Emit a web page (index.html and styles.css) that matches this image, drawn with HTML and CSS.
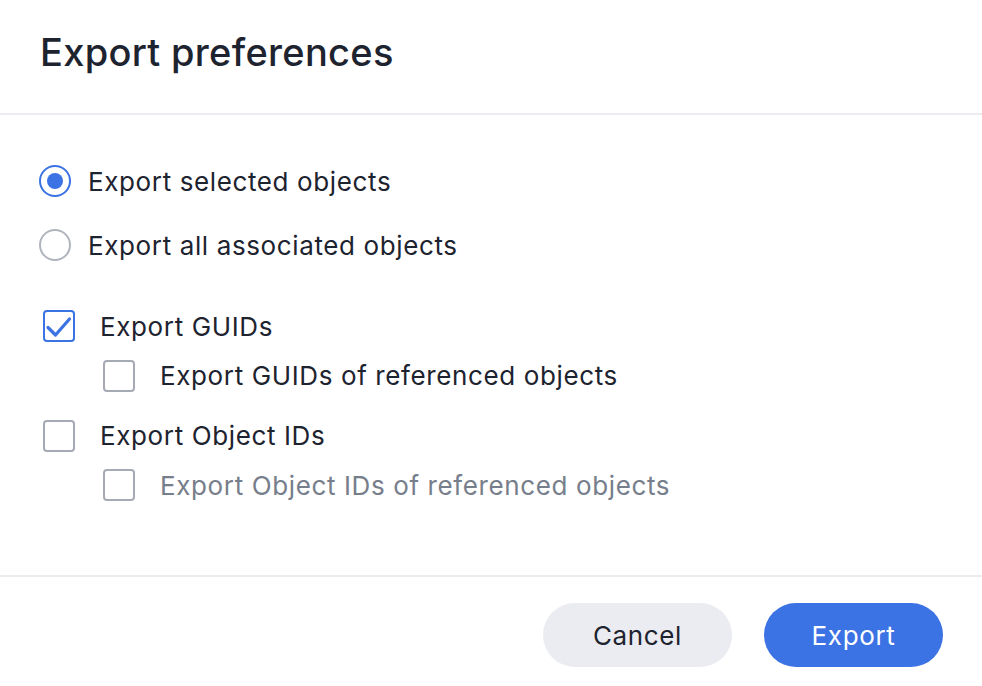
FILE: index.html
```html
<!DOCTYPE html>
<html lang="en">
<head>
<meta charset="utf-8">
<title>Export preferences</title>
<link rel="stylesheet" href="styles.css">
</head>
<body>
<div class="dialog">
  <header class="header">
    <h1 class="title">Export preferences</h1>
  </header>
  <main class="content">
    <div class="radios">
      <label class="radio-row">
        <span class="radio radio-on"><span class="dot"></span></span>
        <span class="label">Export selected objects</span>
      </label>
      <label class="radio-row">
        <span class="radio"></span>
        <span class="label">Export all associated objects</span>
      </label>
    </div>
    <div class="checks">
      <label class="check-row">
        <span class="box box-on">
          <svg width="28" height="28" viewBox="0 0 28 28"><path d="M3 15.5 L10.5 23 L24.5 7" fill="none" stroke="#3b72e4" stroke-width="3.2" stroke-linecap="round" stroke-linejoin="round"/></svg>
        </span>
        <span class="label">Export GUIDs</span>
      </label>
      <label class="check-row sub">
        <span class="box"></span>
        <span class="label">Export GUIDs of referenced objects</span>
      </label>
      <label class="check-row gap">
        <span class="box"></span>
        <span class="label">Export Object IDs</span>
      </label>
      <label class="check-row sub">
        <span class="box"></span>
        <span class="label muted">Export Object IDs of referenced objects</span>
      </label>
    </div>
  </main>
  <footer class="footer">
    <button class="btn btn-secondary">Cancel</button>
    <button class="btn btn-primary">Export</button>
  </footer>
</div>
</body>
</html>
```
FILE: styles.css
```css
html, body {
  margin: 0;
  padding: 0;
  background: #ffffff;
}
body {
  font-family: Inter, "Noto Sans", sans-serif;
  color: #1d232f;
}
.dialog {
  width: 982px;
  height: 686px;
  display: flex;
  flex-direction: column;
}
.header {
  height: 115px;
  box-sizing: border-box;
  border-bottom: 2px solid #ebebf0;
  padding: 0 40px;
  display: flex;
  align-items: center;
}
.title {
  margin: 0 0 10px 0;
  font-size: 38px;
  font-weight: 500;
  letter-spacing: 0.3px;
}
.content {
  flex: 1;
  padding: 50px 40px 0 39px;
}
.radios {
  display: flex;
  flex-direction: column;
  gap: 32px;
}
.radio-row, .check-row {
  display: flex;
  align-items: center;
  height: 32px;
}
.label {
  font-size: 26px;
  font-weight: 400;
  letter-spacing: 0.62px;
}
.muted {
  color: #777e8b;
}
.radio {
  width: 32px;
  height: 32px;
  box-sizing: border-box;
  border-radius: 50%;
  border: 2px solid #b0b4bd;
  margin-right: 17px;
  display: flex;
  align-items: center;
  justify-content: center;
}
.radio-on {
  border-color: #3b72e4;
}
.dot {
  width: 16px;
  height: 16px;
  border-radius: 50%;
  background: #3b72e4;
}
.checks {
  margin-top: 49px;
  padding-left: 4px;
  display: flex;
  flex-direction: column;
}
.check-row + .check-row {
  margin-top: 17.5px;
}
.check-row.gap {
  margin-top: 28px;
}
.check-row.sub {
  padding-left: 60px;
}
.box {
  width: 32px;
  height: 32px;
  box-sizing: border-box;
  border: 2px solid #a5aab4;
  border-radius: 4px;
  margin-right: 25px;
  display: flex;
  align-items: center;
  justify-content: center;
}
.box-on {
  border-color: #3b72e4;
}
.box svg {
  display: block;
}
.footer {
  height: 111px;
  box-sizing: border-box;
  border-top: 2px solid #ebebf0;
  padding: 26px 39px 0 0;
  display: flex;
  justify-content: flex-end;
  align-items: flex-start;
  gap: 32px;
}
.btn {
  height: 64px;
  border: none;
  border-radius: 32px;
  font-family: Inter, "Noto Sans", sans-serif;
  font-size: 26px;
  font-weight: 400;
  letter-spacing: 0.62px;
  padding: 0;
}
.btn-secondary {
  width: 189px;
  background: #ebecf1;
  color: #1d232f;
}
.btn-primary {
  width: 179px;
  background: #3b72e4;
  color: #ffffff;
}
```
